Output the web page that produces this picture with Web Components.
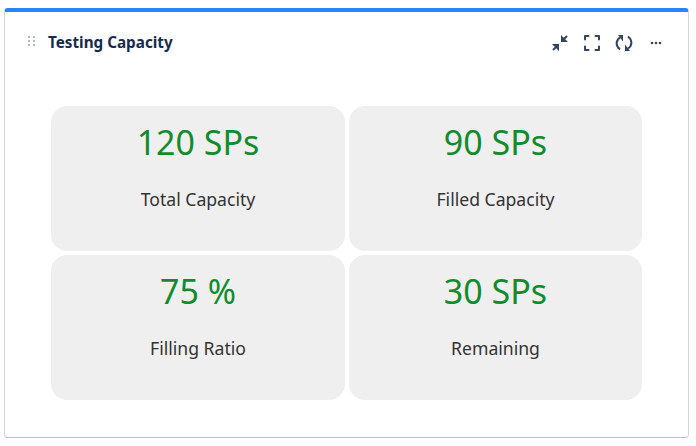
<!DOCTYPE html>
<html>
<head>
<meta charset="utf-8">
<style>
  html, body { margin: 0; background: #fff; }
  body { padding: 8px 7px 8px 4px; font-family: "Noto Sans", sans-serif; }
</style>
</head>
<body>
<capacity-panel heading="Testing Capacity">
  <stat-tile value="120 SPs" label="Total Capacity"></stat-tile>
  <stat-tile value="90 SPs" label="Filled Capacity"></stat-tile>
  <stat-tile value="75 %" label="Filling Ratio"></stat-tile>
  <stat-tile value="30 SPs" label="Remaining"></stat-tile>
</capacity-panel>

<script>
class StatTile extends HTMLElement {
  constructor() {
    super();
    this.attachShadow({ mode: "open" });
    this.shadowRoot.innerHTML = `
      <style>
        :host {
          display: flex;
          flex-direction: column;
          align-items: center;
          height: 145px;
          box-sizing: border-box;
          padding-top: 13px;
          background: #efefef;
          border-radius: 16px;
        }
        .value { font-size: 34px; line-height: 46px; color: #118c2d; }
        .label { margin-top: 22px; font-size: 17.6px; line-height: 24px; color: #333; }
      </style>
      <div class="value">${this.getAttribute("value")}</div>
      <div class="label">${this.getAttribute("label")}</div>
    `;
  }
}

class CapacityPanel extends HTMLElement {
  constructor() {
    super();
    this.attachShadow({ mode: "open" });
    this.shadowRoot.innerHTML = `
      <style>
        :host {
          display: block;
          box-sizing: border-box;
          height: 430px;
          background: #fff;
          border: 1px solid #d3d7e0;
          border-top: 4px solid #2684ff;
          border-bottom-color: #b9bfcc;
          border-radius: 4px;
        }
        header {
          display: flex;
          align-items: center;
          height: 60px;
          padding: 0 23px 0 23px;
        }
        .grip { width: 8px; height: 12px; margin-right: 12px; flex: none; }
        h2 { flex: 1; margin: 0; font-size: 15.25px; font-weight: 700; color: #172b4d; }
        .tools { display: flex; align-items: center; gap: 14px; margin-top: 1px; }
        .tools svg { display: block; width: 18px; height: 18px; fill: none; stroke: #344563; stroke-width: 2; }
        .tools .solid { fill: #344563; stroke: none; }
        .grid {
          display: grid;
          grid-template-columns: 294px 293px;
          gap: 4px;
          padding: 34px 0 0 46px;
        }
      </style>
      <header>
        <svg class="grip" viewBox="0 0 8 12" fill="#b3bac5">
          <rect x="0" y="0" width="2" height="2"/><rect x="5" y="0" width="2" height="2"/>
          <rect x="0" y="4" width="2" height="2"/><rect x="5" y="4" width="2" height="2"/>
          <rect x="0" y="8" width="2" height="2"/><rect x="5" y="8" width="2" height="2"/>
        </svg>
        <h2>${this.getAttribute("heading")}</h2>
        <div class="tools">
          <svg viewBox="0 0 18 18">
            <path class="solid" d="M10 1v7h7zM8 10H1l7 7z"/>
            <path d="M12 6l4-4M6 12l-4 4"/>
          </svg>
          <svg viewBox="0 0 18 18" stroke-linecap="round" stroke-linejoin="round">
            <path d="M2 5.5V2h3.5M12.5 2H16v3.5M16 12.5V16h-3.5M5.500 16H2v-3.500"/>
          </svg>
          <svg viewBox="0 0 18 18">
            <path d="M5 3.500C.5 6.500.5 12 5 15.500M13 2.500c4.500 3.500 4.500 9 0 12"/>
            <path class="solid" d="M8 1v6.500L3 1zM10 17v-6.500l5 6.500z"/>
          </svg>
          <svg viewBox="0 0 18 18" class="solid"><circle cx="5" cy="9" r="1.3"/><circle cx="9" cy="9" r="1.3"/><circle cx="13" cy="9" r="1.3"/></svg>
        </div>
      </header>
      <div class="grid"><slot></slot></div>
    `;
  }
}

customElements.define("stat-tile", StatTile);
customElements.define("capacity-panel", CapacityPanel);
</script>
</body>
</html>
